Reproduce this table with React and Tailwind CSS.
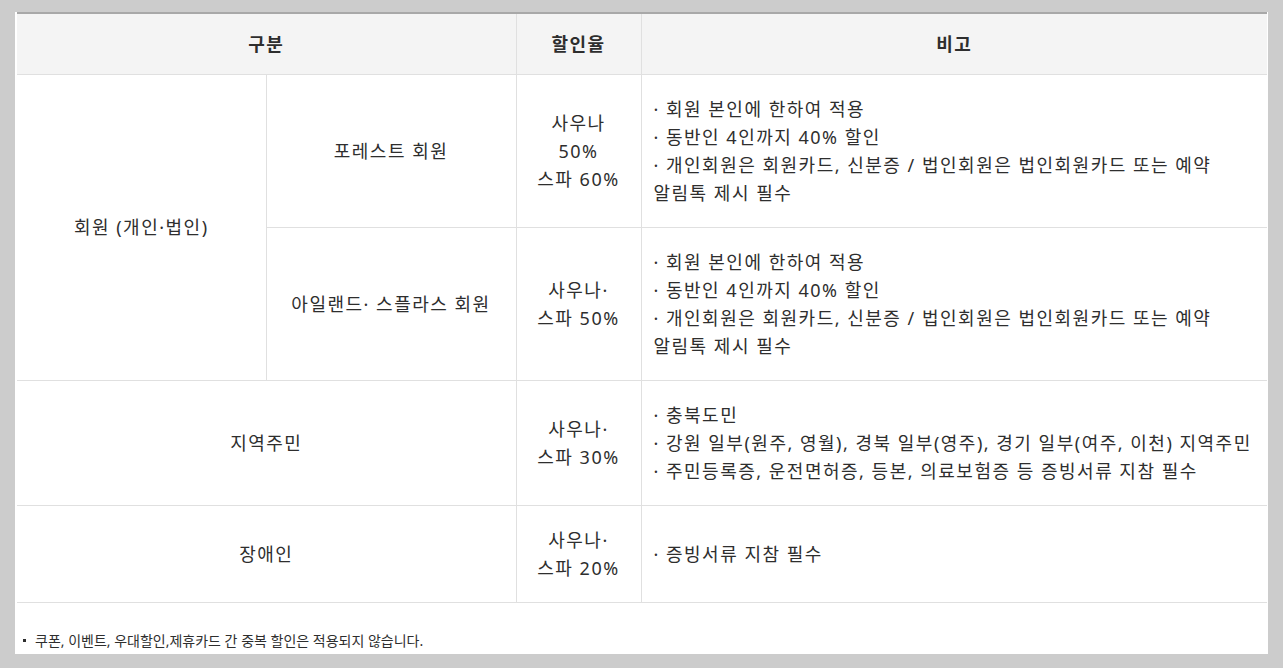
import React from "react";

const memberNotes = (
  <div>
    <p>· 회원 본인에 한하여 적용</p>
    <p>· 동반인 4인까지 40% 할인</p>
    <p>
      · 개인회원은 회원카드, 신분증 / 법인회원은 법인회원카드 또는 예약
      <br />
      알림톡 제시 필수
    </p>
  </div>
);

const localNotes = [
  "· 충북도민",
  "· 강원 일부(원주, 영월), 경북 일부(영주), 경기 일부(여주, 이천) 지역주민",
  "· 주민등록증, 운전면허증, 등본, 의료보험증 등 증빙서류 지참 필수",
];

export default function App() {
  const td = "border border-[#e0e0e0] py-[20px] align-middle";
  const center = `${td} text-center`;
  const note = `${td} pl-[12px] pr-0 text-left whitespace-nowrap`;

  return (
    <div
      className="min-h-[668px] bg-[#cccccc] pt-[12px] pl-[15px] text-[#2e2e2e]"
      style={{ fontFamily: '"Noto Sans", "Noto Sans CJK KR", sans-serif' }}
    >
      <div className="w-[1253px] bg-white px-[2px] pb-[2px]">
        <table className="w-[1250px] table-fixed border-collapse border-t-2 border-t-[#a8a8a8] text-[18px] leading-[28px] tracking-[1.5px]">
          <colgroup>
            <col className="w-[249px]" />
            <col className="w-[250px]" />
            <col className="w-[125px]" />
            <col className="w-[626px]" />
          </colgroup>
          <thead>
            <tr className="h-[61px] bg-[#f4f4f4] font-bold">
              <th colSpan={2} className="border-r border-b border-[#e0e0e0] text-center">
                구분
              </th>
              <th className="border-r border-b border-[#e0e0e0] text-center">할인율</th>
              <th className="border-b border-[#e0e0e0] text-center">비고</th>
            </tr>
          </thead>
          <tbody>
            <tr>
              <td rowSpan={2} className={`${center} border-l-0`}>
                회원 (개인·법인)
              </td>
              <td className={center}>포레스트 회원</td>
              <td className={center}>
                사우나
                <br />
                50%
                <br />
                스파 60%
              </td>
              <td className={`${note} border-r-0`}>{memberNotes}</td>
            </tr>
            <tr>
              <td className={center}>아일랜드· 스플라스 회원</td>
              <td className={center}>
                사우나·
                <br />
                스파 50%
              </td>
              <td className={`${note} border-r-0`}>{memberNotes}</td>
            </tr>
            <tr>
              <td colSpan={2} className={`${center} border-l-0`}>
                지역주민
              </td>
              <td className={center}>
                사우나·
                <br />
                스파 30%
              </td>
              <td className={`${note} border-r-0`}>
                {localNotes.map((t) => (
                  <p key={t}>{t}</p>
                ))}
              </td>
            </tr>
            <tr>
              <td colSpan={2} className={`${center} border-l-0`}>
                장애인
              </td>
              <td className={center}>
                사우나·
                <br />
                스파 20%
              </td>
              <td className={`${note} border-r-0`}>
                <p>· 증빙서류 지참 필수</p>
              </td>
            </tr>
          </tbody>
        </table>
        <div className="mt-[27px] flex items-center gap-[9px] pl-[6px] text-[14px] leading-[22px]">
          <span className="h-[3px] w-[3px] bg-[#2e2e2e]" />
          <span>쿠폰, 이벤트, 우대할인,제휴카드 간 중복 할인은 적용되지 않습니다.</span>
        </div>
      </div>
    </div>
  );
}
